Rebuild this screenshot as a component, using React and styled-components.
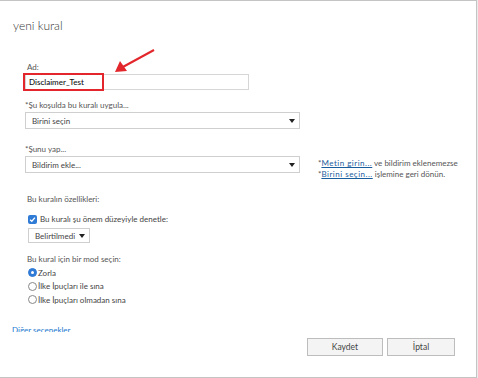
import styled, { createGlobalStyle } from 'styled-components';

const Global = createGlobalStyle`
  html, body { margin: 0; padding: 0; background: #ececec; }
  body { font-family: Lato, "Open Sans", sans-serif; color: #444; }
`

const Dialog = styled.div`
  position: relative;
  width: 476px;
  height: 376px;
  background: #fff;
  border: 1px solid #c4c4c4;
  border-left: none;
  display: flex;
  flex-direction: column;
`
const Scroll = styled.div`
  height: 331px;
  overflow: hidden;
  display: flex;
  flex-direction: column;
`
const Title = styled.h1`
  margin: 18px 0 0 13px;
  font-size: 12px;
  font-weight: 300;
  color: #333;
  line-height: 14px;
`
const Form = styled.div`
  padding-left: 25px;
  display: flex;
  flex-direction: column;
`
const Label = styled.div`
  font-size: 8px;
  line-height: 11px;
  color: #555;
  white-space: nowrap;
  margin-top: ${p => p.mt || 0}px;
  margin-left: ${p => p.ml || 0}px;
  margin-bottom: 1px;
`
const InputWrap = styled.div`
  position: relative;
  width: 224px;
  height: 16px;
  border: 1px solid #d6d6d6;
  box-sizing: border-box;
`
const InputText = styled.div`
  font-size: 8px;
  line-height: 14px;
  padding-left: 3px;
  color: #111;
  font-weight: 500;
`
const Highlight = styled.div`
  position: absolute;
  left: -3px;
  top: -2px;
  width: 81px;
  height: 18px;
  border: 2.5px solid #e2262b;
  box-sizing: border-box;
`
const Arrow = styled.svg`
  position: absolute;
  left: 112px;
  top: 46px;
`
const Row = styled.div`
  display: flex;
  align-items: flex-start;
`
const Select = styled.div`
  width: ${p => p.w}px;
  height: ${p => p.h || 17}px;
  border: 1px solid #cfcfcf;
  box-sizing: border-box;
  display: flex;
  align-items: center;
  justify-content: space-between;
  padding: 0 4px 0 6px;
  font-size: 8px;
  color: #444;
  white-space: nowrap;
  margin-left: ${p => p.ml || 0}px;
  margin-top: ${p => p.mt || 0}px;
`
const Caret = styled.span`
  width: 0;
  height: 0;
  border-left: 3.5px solid transparent;
  border-right: 3.5px solid transparent;
  border-top: 4px solid #222;
`
const Hint = styled.div`
  margin: 2px 0 0 18px;
  font-size: 8px;
  line-height: 11px;
  color: #555;
  white-space: nowrap;
`
const HintLink = styled.a`
  color: #1a5d9c;
  text-decoration: underline;
  letter-spacing: 0.5px;
`
const CheckRow = styled.div`
  display: flex;
  align-items: center;
  margin: 8px 0 0 3px;
  font-size: 8px;
  color: #444;
`
const Check = styled.span`
  width: 9px;
  height: 9px;
  border-radius: 2px;
  background: #2f7bd6;
  display: inline-flex;
  align-items: center;
  justify-content: center;
  margin-right: 3px;
`
const RadioRow = styled.div`
  display: flex;
  align-items: center;
  height: 13.5px;
  margin-left: 3px;
  font-size: 8px;
  color: #444;
`
const Radio = styled.span`
  width: 9px;
  height: 9px;
  border-radius: 50%;
  box-sizing: border-box;
  border: 1px solid ${p => (p.on ? '#2f7bd6' : '#888')};
  background: ${p => (p.on ? '#2f7bd6' : '#fff')};
  display: inline-flex;
  align-items: center;
  justify-content: center;
  margin-right: 1px;
  &::after {
    content: '';
    width: 3px;
    height: 3px;
    border-radius: 50%;
    background: ${p => (p.on ? '#fff' : 'transparent')};
  }
`
const More = styled.a`
  margin: auto 0 0 12px;
  font-size: 8px;
  line-height: 11px;
  color: #1d7ad0;
  transform: translateY(4px);
`
const Footer = styled.div`
  display: flex;
  justify-content: flex-end;
  gap: 4px;
  padding: 6px 21px 0 0;
`
const Button = styled.button`
  width: ${p => p.w}px;
  height: 18px;
  border: 1px solid #bdbdbd;
  background: #f4f4f4;
  font-family: inherit;
  font-size: 8.5px;
  color: #444;
  padding: 0;
`

const App = () => (
  <Dialog>
    <Global />
    <Scroll>
      <Title>yeni kural</Title>
      <Form>
        <Label mt={29} ml={2}>Ad:</Label>
        <InputWrap>
          <InputText>Disclaimer_Test</InputText>
          <Highlight />
        </InputWrap>
        <Label mt={10}>*Şu koşulda bu kuralı uygula...</Label>
        <Select w={275}>Birini seçin<Caret /></Select>
        <Label mt={15}>*Şunu yap...</Label>
        <Row>
          <Select w={275}>Bildirim ekle...<Caret /></Select>
          <Hint>
            *<HintLink>Metin girin...</HintLink> ve bildirim eklenemezse<br />
            *<HintLink>Birini seçin...</HintLink> işlemine geri dönün.
          </Hint>
        </Row>
        <Label mt={14} ml={2}>Bu kuralın özellikleri:</Label>
        <CheckRow>
          <Check>
            <svg width="7" height="7" viewBox="0 0 8 8">
              <path d="M1.2 4.2 L3.2 6 L6.8 1.8" stroke="#fff" strokeWidth="1.4" fill="none" />
            </svg>
          </Check>
          Bu kuralı şu önem düzeyiyle denetle:
        </CheckRow>
        <Select w={62} h={15} ml={3} mt={4}>Belirtilmedi<Caret /></Select>
        <Label mt={11} ml={2}>Bu kural için bir mod seçin:</Label>
        <RadioRow><Radio on />Zorla</RadioRow>
        <RadioRow><Radio />İlke İpuçları ile sına</RadioRow>
        <RadioRow><Radio />İlke İpuçları olmadan sına</RadioRow>
      </Form>
      <More>Diğer seçenekler</More>
    </Scroll>
    <Footer>
      <Button w={76}>Kaydet</Button>
      <Button w={68}>İptal</Button>
    </Footer>
    <Arrow width="46" height="28" viewBox="0 0 46 28">
      <path d="M42 3 L9 21" stroke="#e2262b" strokeWidth="2" />
      <path d="M3 25 L8 14 L15 24 Z" fill="#e2262b" />
    </Arrow>
  </Dialog>
)

export default App
